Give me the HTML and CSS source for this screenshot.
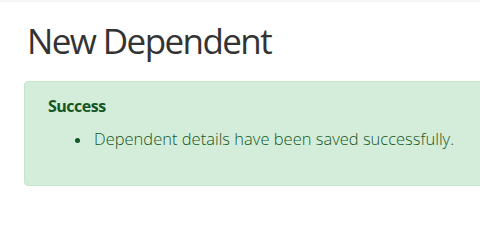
FILE: index.html
```html
<!DOCTYPE html>
<html lang="en">
<head>
<meta charset="utf-8">
<title>New Dependent</title>
<link rel="stylesheet" href="styles.css">
</head>
<body>
<div class="topbar"></div>
<main class="container">
  <h1 class="page-title">New Dependent</h1>
  <div class="alert alert-success">
    <h4 class="alert-heading">Success</h4>
    <ul class="alert-list">
      <li>Dependent details have been saved successfully.</li>
    </ul>
  </div>
</main>
</body>
</html>
```

FILE: styles.css
```css
html, body {
  margin: 0;
  padding: 0;
  background: #ffffff;
  overflow: hidden;
}
body {
  font-family: "Open Sans", "Noto Sans", sans-serif;
  color: #333333;
}
.topbar {
  height: 2px;
  background: #f5f5f5;
}
.container {
  width: 520px;
  padding: 0 0 0 24px;
}
.page-title {
  margin: 17px 0 19px 3px;
  font-size: 35px;
  line-height: 43px;
  letter-spacing: -1.6px;
  font-weight: 400;
  color: #333333;
}
.alert {
  border: 1px solid #c3e6cb;
  border-radius: 4px;
  background: #d4edda;
  color: #155724;
  padding: 12px 22px 12px 23px;
  height: 79px;
}
.alert-heading {
  margin: 0;
  font-size: 16px;
  line-height: 24px;
  letter-spacing: -0.5px;
  font-weight: 700;
}
.alert-list {
  list-style: none;
  margin: 9px 0 0 0;
  padding: 0 0 0 24px;
}
.alert-list li {
  display: flex;
  align-items: center;
  font-size: 16.5px;
  line-height: 24px;
  font-weight: 300;
}
.alert-list li::before {
  content: "";
  width: 5px;
  height: 5px;
  border-radius: 50%;
  background: #155724;
  margin: 2px 14px 0 3px;
  flex: none;
}
```
